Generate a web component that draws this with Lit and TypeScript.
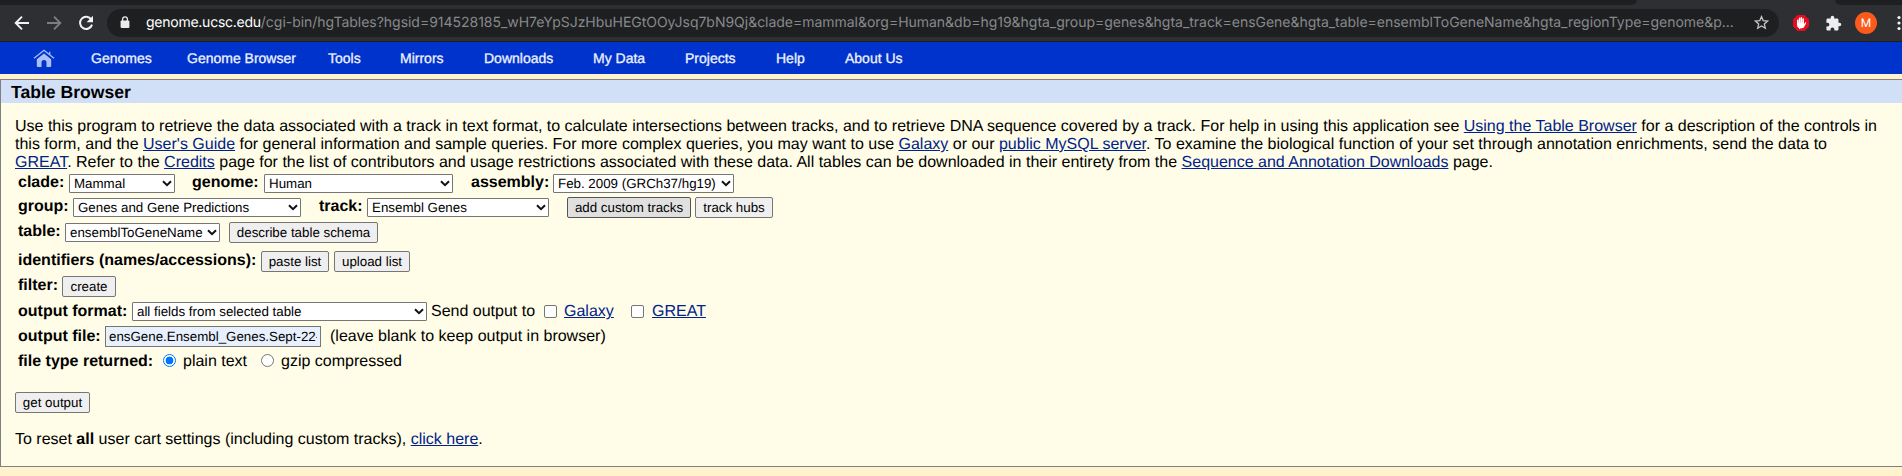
import { LitElement, html, css } from "lit";
import { customElement } from "lit/decorators.js";

const cell = (w: number, content: unknown, cls = "") =>
  html`<div class="cell ${cls}" style="width:${w}px">${content}</div>`;

const label = (w: number, text: string, cls = "text") => cell(w, html`<b>${text}</b>`, cls);

const gap = (w: number) => html`<span style="width:${w}px"></span>`;

const pick = (w: number, text: string) => html`
  <div class="pick" style="width:${w}px">
    <select><option>${text}</option></select>
    <svg viewBox="0 0 10 7" width="10" height="7"><path d="M1 1.2 5 5.2 9 1.2" fill="none" stroke="#111" stroke-width="2"/></svg>
  </div>`;

const btn = (w: number, text: string, cls = "") =>
  html`<button class=${cls} style="width:${w}px">${text}</button>`;

const NAV: [string, number][] = [
  ["Genomes", 96], ["Genome Browser", 141], ["Tools", 72], ["Mirrors", 84], ["Downloads", 109],
  ["My Data", 92], ["Projects", 91], ["Help", 69], ["About Us", 80],
];

@customElement("app-root")
export class AppRoot extends LitElement {
  static styles = css`
    :host { display: flex; flex-direction: column; width: 1902px; height: 476px; overflow: hidden;
      background: #fff3ce; font: 16px/18px "Liberation Sans", Arial, sans-serif; color: #000;
      text-rendering: geometricPrecision; }
    * { box-sizing: border-box; }
    svg { display: block; flex: none; }
    .tabs { height: 5px; flex: none; background: #2e2f33; display: flex; justify-content: space-between; }
    .tab-left { width: 1637px; background: #1e1f21; border-bottom-right-radius: 5px; }
    .tab-right { width: 67px; background: #1e1f21; border-bottom-left-radius: 5px; }
    .toolbar { height: 37px; flex: none; background: #2e2f33; border-bottom: 1px solid #1c1d1f; display: flex;
      align-items: center; padding-left: 14px; }
    .tools { display: flex; width: 94px; gap: 16px; align-items: center; }
    .omni { width: 1672px; height: 28px; border-radius: 14px; background: #1e1f21; display: flex; align-items: center;
      padding-left: 13px; margin-top: -1px; flex: none; }
    .url { width: 1624px; flex: none; padding-left: 16px; font: 14px/20px Inter, sans-serif; letter-spacing: -0.025px;
      color: #87898c; white-space: nowrap; }
    .host { color: #fff; letter-spacing: -0.25px; }
    .ext { display: flex; align-items: center; }
    .block { margin-left: 13px; }
    .puzzle { margin-left: 15px; }
    .dots { margin-left: 19px; }
    .avatar { width: 22px; height: 22px; border-radius: 50%; background: #fa5b1c; color: #fff; text-align: center;
      font: 12px/22px Roboto, sans-serif; margin-left: 13px; }
    .nav { height: 32px; flex: none; background: #0033cb; display: flex; align-items: center; padding-left: 33px; color: #eef2ff;
      font-size: 14px; -webkit-text-stroke: 0.3px #eef2ff; }
    .home { width: 58px; }
    .nav span { white-space: nowrap; flex: none; }
    .panel { margin-top: 5px; height: 388px; flex: none; border: 1px solid #808080; border-right: 0; background: #fffde7;
      display: flex; flex-direction: column; }
    .title { height: 23px; flex: none; background: #d1e0f6; padding-left: 10px; font-weight: bold; font-size: 17.6px; line-height: 24px; }
    .intro { margin: 14px 0 0 14px; height: 54px; padding-top: 1px; flex: none; white-space: nowrap; }
    .intro div { height: 18px; width: max-content; }
    a { color: #00228b; text-decoration: underline; }
    .row { display: flex; align-items: center; flex: none; padding-left: 17px; white-space: nowrap; }
    .cell { flex: none; }
    .text { padding-bottom: 0.5px; }
    .mid { padding-top: 1.5px; }
    .low { padding-top: 3px; }
    .pick { display: inline-grid; align-items: center; height: 19px; flex: none; }
    .pick select { grid-area: 1 / 1; appearance: none; width: 100%; height: 19px; border: 1px solid #767676; border-radius: 1px;
      background: #fff; color: #000; font: 13.333px "Liberation Sans", Arial, sans-serif; padding: 0 0 0 4px; margin: 0;
      text-rendering: geometricPrecision; }
    .pick svg { grid-area: 1 / 1; justify-self: end; margin-right: 3px; pointer-events: none; }
    button { height: 21px; flex: none; border: 1px solid #767676; border-radius: 2px; background: #efefef; color: #000; padding: 0;
      margin: 0; font: 13.333px "Liberation Sans", Arial, sans-serif; text-rendering: geometricPrecision; }
    button.hot { background: #e0e0e0; border-color: #555; }
    .file { width: 216px; height: 21px; border: 1px solid #767676; background: #e8f0fe; padding: 0 3px; margin: 0; flex: none;
      font: 13.333px "Liberation Sans", Arial, sans-serif; text-rendering: geometricPrecision; color: #000; border-radius: 0; }
    .box { appearance: none; width: 13px; height: 13px; border: 1px solid #767676; border-radius: 2px; background: #fff; margin: 0; flex: none; }
    .radio { border-radius: 50%; }
    .on { border-color: #0075ff; background: radial-gradient(circle, #0075ff 3.6px, #fff 4.2px); }
    .r1 { height: 25px; } .r2 { height: 22px; } .r3 { height: 28px; } .r4 { height: 31px; } .r5 { height: 19px; }
    .r6 { height: 31px; } .r7 { height: 18px; } .r8 { height: 31px; }
    .go { margin-top: 16px; height: 21px; padding-left: 14px; margin-bottom: 18px; }
    .reset { padding-left: 14px; white-space: pre; }
  `;

  render() {
    return html`
      <div class="tabs"><div class="tab-left"></div><div class="tab-right"></div></div>
      <div class="toolbar">
        <div class="tools">
          <svg width="16" height="16" viewBox="0 0 16 16" fill="none" stroke="#f1f3f4" stroke-width="1.9"><path d="M15 8H2.5M8 1.7 1.7 8 8 14.3"/></svg>
          <svg width="16" height="16" viewBox="0 0 16 16" fill="none" stroke="#7d7e81" stroke-width="1.9"><path d="M1 8h12.500M8 1.7 14.300 8 8 14.300"/></svg>
          <svg width="16" height="16" viewBox="0 0 16 16"><path d="M13.300 4.600A6.100 6.100 0 1 0 14 9.600" fill="none" stroke="#f1f3f4" stroke-width="2"/><path d="M15 .8v6.400H8.600z" fill="#f1f3f4"/></svg>
        </div>
        <div class="omni">
          <svg width="10" height="13" viewBox="0 0 10 13"><path d="M2.600 5.500V3.300a2.400 2.400 0 0 1 4.800 0v2.200" fill="none" stroke="#e8eaed" stroke-width="1.300"/><rect x=".6" y="4.600" width="8.800" height="7.400" rx="1" fill="#e8eaed"/></svg>
          <div class="url"><span class="host">genome.ucsc.edu</span>/cgi-bin/hgTables?hgsid=914528185_wH7eYpSJzHbuHEGtOOyJsq7bN9Qj&amp;clade=mammal&amp;org=Human&amp;db=hg19&amp;hgta_group=genes&amp;hgta_track=ensGene&amp;hgta_table=ensemblToGeneName&amp;hgta_regionType=genome&amp;p...</div>
          <svg width="15" height="15" viewBox="0 0 15 15"><path d="M7.500 1.600 9.200 5.600l4.400.4-3.300 2.900 1 4.300-3.800-2.300-3.800 2.300 1-4.300L1.400 6l4.400-.4z" fill="none" stroke="#c3c5c8" stroke-width="1.300"/></svg>
        </div>
        <div class="ext">
          <svg class="block" width="18" height="18" viewBox="0 0 18 18"><path d="M5.600 1h6.800L17 5.600v6.800L12.400 17H5.600L1 12.400V5.600z" fill="#e40d21"/><path d="M5.800 10V6.300M7.600 9V4.300M9.400 9V3.800M11.200 9V5" stroke="#fff" stroke-width="1.500" stroke-linecap="round"/><path d="M5 8.500h7v1.700l1-1.500c.5-.7 1.500-.2 1.100.6l-2.300 4.300c-.8 1-4.700 1.200-5.800 0-.8-.9-1-2.500-1-5.100z" fill="#fff"/></svg>
          <svg class="puzzle" width="17" height="17" viewBox="0 0 24 24"><path fill="#eceef0" d="M20.500 11H19V7c0-1.100-.9-2-2-2h-4V3.500a2.500 2.500 0 0 0-5 0V5H4c-1.100 0-2 .9-2 2v3.800h1.500a2.700 2.700 0 0 1 0 5.400H2V20c0 1.100.9 2 2 2h3.800v-1.500a2.700 2.700 0 0 1 5.400 0V22H17c1.100 0 2-.9 2-2v-4h1.500a2.500 2.500 0 0 0 0-5z"/></svg>
          <div class="avatar">M</div>
          <svg class="dots" width="6" height="16" viewBox="0 0 6 16" fill="#f1f3f4"><circle cx="3" cy="2.500" r="1.600"/><circle cx="3" cy="8" r="1.600"/><circle cx="3" cy="13.500" r="1.600"/></svg>
        </div>
      </div>
      <div class="nav">
        <div class="home"><svg width="22" height="19" viewBox="0 0 22 19"><path d="M1 9.300 11 1.300l10 8M16.700 5.600V2.700" fill="none" stroke="#a9bff6" stroke-width="1.300"/><path d="M3.800 10.200 11 4.500l7.200 5.700V17a1 1 0 0 1-1 1h-3.700v-4.500a2.500 2.500 0 0 0-5 0V18H4.800a1 1 0 0 1-1-1z" fill="#a9bff6"/></svg></div>
        ${NAV.map(([t, w]) => html`<span style="width:${w}px">${t}</span>`)}
      </div>
      <div class="panel">
        <div class="title">Table Browser</div>
        <div class="intro">
          <div>Use this program to retrieve the data associated with a track in text format, to calculate intersections between tracks, and to retrieve DNA sequence covered by a track. For help in using this application see <a>Using the Table Browser</a> for a description of the controls in</div>
          <div>this form, and the <a>User's Guide</a> for general information and sample queries. For more complex queries, you may want to use <a>Galaxy</a> or our <a>public MySQL server</a>. To examine the biological function of your set through annotation enrichments, send the data to</div>
          <div><a>GREAT</a>. Refer to the <a>Credits</a> page for the list of contributors and usage restrictions associated with these data. All tables can be downloaded in their entirety from the <a>Sequence and Annotation Downloads</a> page.</div>
        </div>
        <div class="row r1">${label(51, "clade:")}${pick(106, "Mammal")}${gap(17)}${label(72, "genome:")}${pick(189, "Human")}${gap(18)}${label(82, "assembly:")}${pick(181, "Feb. 2009 (GRCh37/hg19)")}</div>
        <div class="row r2">${label(55, "group:")}${pick(228, "Genes and Gene Predictions")}${gap(18)}${label(48, "track:")}${pick(182, "Ensembl Genes")}${gap(18)}${btn(124, "add custom tracks", "hot")}${gap(4)}${btn(78, "track hubs")}</div>
        <div class="row r3">${label(47, "table:")}${pick(155, "ensemblToGeneName")}${gap(9)}${btn(149, "describe table schema")}</div>
        <div class="row r4">${label(243, "identifiers (names/accessions):")}${btn(68, "paste list")}${gap(5)}${btn(76, "upload list")}</div>
        <div class="row r5">${label(44, "filter:")}${btn(54, "create")}</div>
        <div class="row r6">${label(114, "output format:", "mid")}${pick(295, "all fields from selected table")}${gap(4)}${cell(113, "Send output to", "mid")}<input class="box" type="checkbox">${gap(7)}${cell(67, html`<a>Galaxy</a>`, "mid")}<input class="box" type="checkbox">${gap(8)}${cell(60, html`<a>GREAT</a>`, "mid")}</div>
        <div class="row r7">${label(87, "output file:", "mid")}<input class="file" value="ensGene.Ensembl_Genes.Sept-22-2020">${gap(9)}${cell(290, "(leave blank to keep output in browser)", "mid")}</div>
        <div class="row r8">${label(145, "file type returned:", "low")}<input class="box radio on" type="radio" name="kind">${gap(7)}${cell(78, "plain text", "low")}<input class="box radio" type="radio" name="kind">${gap(7)}${cell(140, "gzip compressed", "low")}</div>
        <div class="row go">${btn(75, "get output")}</div>
        <div class="row reset">To reset <b>all</b> user cart settings (including custom tracks), <a>click here</a>.</div>
      </div>`;
  }
}
